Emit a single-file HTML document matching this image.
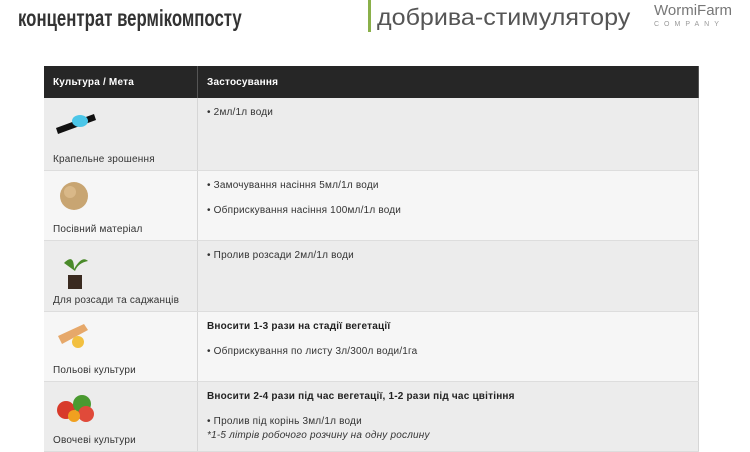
<!DOCTYPE html>
<html><head><meta charset="utf-8"><style>
body{margin:0;width:750px;height:450px;overflow:hidden;background:#fff;font-family:"Liberation Sans","DejaVu Sans",sans-serif;position:relative}
.abs{position:absolute;white-space:nowrap}
table{position:absolute;left:44px;top:66px;width:655px;border-collapse:collapse;font-size:10px;letter-spacing:0.2px;color:#333}
td,th{border-right:1px solid #d6d6d6;vertical-align:top;padding:0;text-align:left}
th{background:#262626;color:#fff;font-weight:bold;height:32px;vertical-align:middle;padding-left:9px;border-right:1px solid #555}
tr.a td{background:#ececec}
tr.b td{background:#f6f6f6}
tr td:first-child{position:relative}
tr td{border-bottom:1px solid #ddd}
.lab{position:absolute;left:9px;bottom:5px;font-size:10px;color:#333}
.ic{position:absolute;left:10px;top:8px}
.c{padding:8px 0 0 9px;line-height:14px}
b{color:#222}
</style></head><body>
<div class="abs" style="left:18px;top:5px;font-size:23px;font-weight:bold;color:#333;transform:scaleX(0.73);transform-origin:0 0">концентрат вермікомпосту</div>
<div class="abs" style="left:368px;top:0;width:3px;height:32px;background:#8ab04a"></div>
<div class="abs" style="left:377px;top:4px;font-size:23px;color:#555;transform:scaleX(1.09);transform-origin:0 0">добрива-стимулятору</div>
<div class="abs" style="left:654px;top:2px;font-size:15px;color:#777">WormiFarm</div>
<div class="abs" style="left:654px;top:21px;font-size:7px;color:#999;letter-spacing:5px">COMPANY</div>
<table>
<tr><th style="width:144px">Культура / Мета</th><th>Застосування</th></tr>
<tr class="a" style="height:72px"><td><svg class="ic" width="45" height="30"><path d="M2 22 L40 8 L42 14 L4 28Z" fill="#111"/><ellipse cx="26" cy="15" rx="8" ry="6" fill="#4cc6e8"/></svg><span class="lab">Крапельне зрошення</span></td><td class="c">• 2мл/1л води</td></tr>
<tr class="b" style="height:70px"><td><svg class="ic" width="40" height="34"><circle cx="20" cy="17" r="14" fill="#c8a572"/><circle cx="16" cy="13" r="6" fill="#d9b888"/></svg><span class="lab">Посівний матеріал</span></td><td class="c">• Замочування насіння 5мл/1л води<br><div style="height:11px"></div>• Обприскування насіння 100мл/1л води</td></tr>
<tr class="a" style="height:71px"><td><svg class="ic" width="40" height="42"><path d="M10 14 Q20 4 20 20 Q28 6 34 12 Q24 14 21 22Z" fill="#4a8a2a"/><rect x="14" y="26" width="14" height="14" fill="#3a2a20"/></svg><span class="lab">Для розсади та саджанців</span></td><td class="c">• Пролив розсади 2мл/1л води</td></tr>
<tr class="b" style="height:70px"><td><svg class="ic" width="40" height="34"><path d="M4 16 L30 4 L34 10 L8 24Z" fill="#e6a86a"/><circle cx="24" cy="22" r="6" fill="#f2c040"/></svg><span class="lab">Польові культури</span></td><td class="c"><b>Вносити 1-3 рази на стадії вегетації</b><br><div style="height:11px"></div>• Обприскування по листу 3л/300л води/1га</td></tr>
<tr class="a" style="height:70px"><td><svg class="ic" width="44" height="34"><circle cx="12" cy="20" r="9" fill="#d83a2a"/><circle cx="28" cy="14" r="9" fill="#4a9a30"/><circle cx="32" cy="24" r="8" fill="#e04a3a"/><circle cx="20" cy="26" r="6" fill="#f0a020"/></svg><span class="lab">Овочеві культури</span></td><td class="c"><b>Вносити 2-4 рази під час вегетації, 1-2 рази під час цвітіння</b><br><div style="height:11px"></div>• Пролив під корінь 3мл/1л води<br><i>*1-5 літрів робочого розчину на одну рослину</i></td></tr>
</table>
</body></html>
